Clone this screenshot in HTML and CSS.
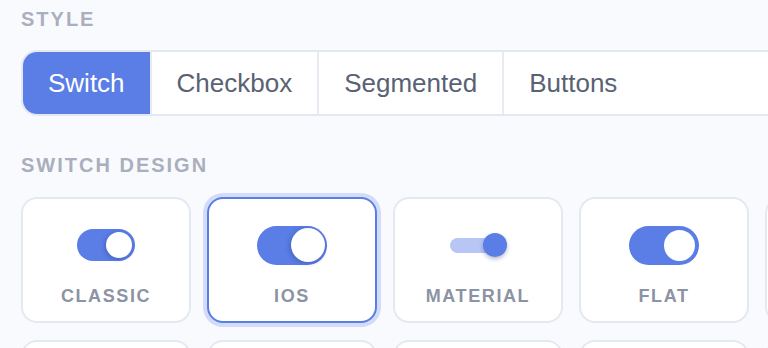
FILE: index.html
```html
<!DOCTYPE html>
<html lang="en">
<head>
<meta charset="UTF-8">
<meta name="viewport" content="width=device-width, initial-scale=1.0">
<title>Toggle Style Picker</title>
<link rel="stylesheet" href="styles.css">
</head>
<body>

<div class="panel">
    <h2 class="section-label">Style</h2>
    <div class="segmented">
        <button class="segment active">Switch</button>
        <button class="segment">Checkbox</button>
        <button class="segment">Segmented</button>
        <button class="segment">Buttons</button>
    </div>

    <h2 class="section-label design-label">Switch Design</h2>
    <div class="design-grid">
        <div class="design-card">
            <div class="preview">
                <span class="toggle classic"><span class="knob"></span></span>
            </div>
            <span class="design-name">Classic</span>
        </div>
        <div class="design-card selected">
            <div class="preview">
                <span class="toggle ios"><span class="knob"></span></span>
            </div>
            <span class="design-name">iOS</span>
        </div>
        <div class="design-card">
            <div class="preview">
                <span class="material">
                    <span class="track"></span>
                    <span class="knob"></span>
                </span>
            </div>
            <span class="design-name">Material</span>
        </div>
        <div class="design-card">
            <div class="preview">
                <span class="toggle flat"><span class="knob"></span></span>
            </div>
            <span class="design-name">Flat</span>
        </div>
        <!-- cards below and to the right are outside the visible area -->
        <div class="design-card"></div>
        <div class="design-card"></div>
        <div class="design-card"></div>
        <div class="design-card"></div>
        <div class="design-card"></div>
        <div class="design-card"></div>
    </div>
</div>

</body>
</html>
```

FILE: styles.css
```css
html, body {
    overflow: hidden;
}

body {
    margin: 0;
    padding: 7px 0 0 21px;
    background: #f9fafe;
    font-family: 'Liberation Sans', Arial, sans-serif;
}

.panel {
    width: 1100px;
}

.section-label {
    margin: 0;
    font-size: 20px;
    line-height: 24px;
    font-weight: 700;
    letter-spacing: 2px;
    text-transform: uppercase;
    color: #a9afbd;
}

.design-label {
    margin-top: 37px;
}

.segmented {
    display: flex;
    margin-top: 19px;
    background: #fff;
    border: 2px solid #e4e8f0;
    border-radius: 16px;
    overflow: hidden;
}

.segment {
    padding: 16px 25px;
    font-family: inherit;
    font-size: 26px;
    line-height: 30px;
    color: #596273;
    background: none;
    border: none;
    border-left: 2px solid #e8ebf2;
    cursor: pointer;
}

.segment:first-child {
    border-left: none;
}

.segment.active {
    background: #5a7de6;
    color: #fff;
}

.design-grid {
    display: grid;
    grid-template-columns: repeat(5, 170px);
    gap: 17px 16px;
    margin-top: 20px;
}

.design-card {
    box-sizing: border-box;
    height: 126px;
    padding-top: 26px;
    display: flex;
    flex-direction: column;
    align-items: center;
    background: #fff;
    border: 2px solid #e4e8f1;
    border-radius: 16px;
}

.design-card.selected {
    border-color: #5a7de6;
    box-shadow: 0 0 0 4px #d2dbf8;
}

.preview {
    height: 40px;
    display: flex;
    align-items: center;
    justify-content: center;
}

.design-name {
    margin-top: 21px;
    font-size: 18px;
    line-height: 20px;
    font-weight: 700;
    letter-spacing: 1.6px;
    text-transform: uppercase;
    color: #8b93a4;
}

/* switch previews */
.toggle {
    box-sizing: border-box;
    display: flex;
    align-items: center;
    justify-content: flex-end;
    background: #5a7de6;
}

.toggle .knob {
    display: block;
    border-radius: 50%;
    background: #fff;
}

.toggle.classic {
    width: 58px;
    height: 32px;
    padding: 3px;
    border-radius: 16px;
}

.toggle.classic .knob {
    width: 26px;
    height: 26px;
    box-shadow: -1px 1px 4px rgba(20, 30, 80, 0.3);
}

.toggle.ios {
    width: 70px;
    height: 39px;
    padding: 2px;
    border-radius: 20px;
}

.toggle.ios .knob {
    width: 34px;
    height: 34px;
    box-shadow: -1px 1px 5px rgba(20, 30, 80, 0.3);
}

.toggle.flat {
    width: 70px;
    height: 39px;
    padding: 4px;
    border-radius: 20px;
}

.toggle.flat .knob {
    width: 31px;
    height: 31px;
}

.material {
    display: flex;
    align-items: center;
    width: 57px;
}

.material .track {
    display: block;
    width: 52px;
    height: 15px;
    border-radius: 8px;
    background: #b7c6f4;
}

.material .knob {
    display: block;
    flex-shrink: 0;
    width: 24px;
    height: 24px;
    margin-left: -19px;
    border-radius: 50%;
    background: #5a7de6;
    box-shadow: 0 2px 4px rgba(20, 30, 80, 0.3);
}
```
